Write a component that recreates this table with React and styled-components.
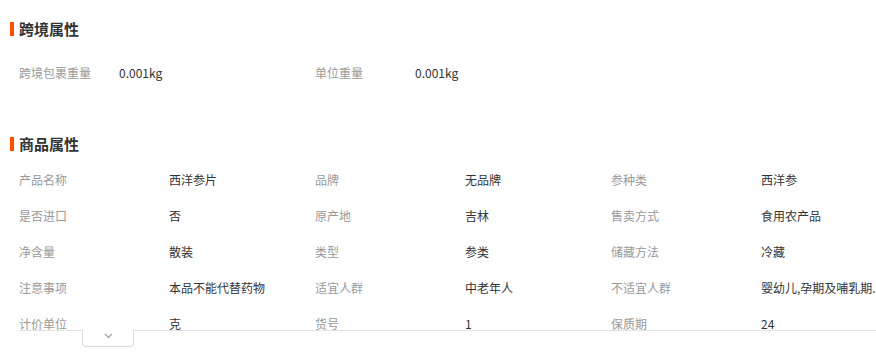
import React from "react";
import styled, { createGlobalStyle } from "styled-components";

const Global = createGlobalStyle`
  html { overflow: hidden; }
  html, body { margin: 0; padding: 0; background: #fff; }
  body { font-family: "Noto Sans CJK SC", "Noto Sans", sans-serif; }
`;

const Wrap = styled.div`
  position: relative;
  width: 876px;
  padding-bottom: 20px;
`;

const Fold = styled.div`
  margin-left: 10px;
  padding-left: 9px;
  height: 330px;
  overflow: hidden;
`;

const Divider = styled.div`
  margin-left: 20px;
  height: 1px;
  background: #e3e3e3;
`;

const Title = styled.h3`
  display: flex;
  align-items: center;
  gap: 5px;
  margin: ${(p) => p.$top}px 0 0 -9px;
  height: 20px;
  font-size: 15px;
  font-weight: 700;
  color: #333;
  line-height: 20px;
  &::before {
    content: "";
    width: 4px;
    height: 14px;
    background: #ff4e00;
  }
`;

const Grid = styled.div`
  display: grid;
  grid-template-columns: repeat(3, 296px);
  margin-top: ${(p) => p.$top}px;
`;

const Item = styled.div`
  display: flex;
  height: 36px;
  align-items: center;
  font-size: 12px;
  white-space: nowrap;
`;

const Label = styled.span`
  width: ${(p) => p.$w}px;
  flex: none;
  color: #999;
`;

const Value = styled.span`
  color: #333;
`;

const Toggle = styled.button`
  position: absolute;
  left: 82px;
  top: 330px;
  width: 52px;
  height: 17px;
  padding: 3px 0 0;
  background: #fff;
  border: 1px solid #dcdcdc;
  border-top: none;
  border-radius: 0 0 4px 4px;
  display: flex;
  justify-content: center;
  align-items: flex-start;
  cursor: pointer;
`;

const cross = [
  ["跨境包裹重量", "0.001kg"],
  ["单位重量", "0.001kg"],
];

const props = [
  ["产品名称", "西洋参片"],
  ["品牌", "无品牌"],
  ["参种类", "西洋参"],
  ["是否进口", "否"],
  ["原产地", "吉林"],
  ["售卖方式", "食用农产品"],
  ["净含量", "散装"],
  ["类型", "参类"],
  ["储藏方法", "冷藏"],
  ["注意事项", "本品不能代替药物"],
  ["适宜人群", "中老年人"],
  ["不适宜人群", "婴幼儿,孕期及哺乳期."],
  ["计价单位", "克"],
  ["货号", "1"],
  ["保质期", "24"],
];

export default function App() {
  return (
    <Wrap>
      <Global />
      <Fold>
        <Title $top={19}>跨境属性</Title>
        <Grid $top={15}>
          {cross.map(([k, v]) => (
            <Item key={k}>
              <Label $w={100}>{k}</Label>
              <Value>{v}</Value>
            </Item>
          ))}
        </Grid>
        <Title $top={44}>商品属性</Title>
        <Grid $top={7}>
          {props.map(([k, v]) => (
            <Item key={k}>
              <Label $w={150}>{k}</Label>
              <Value>{v}</Value>
            </Item>
          ))}
        </Grid>
      </Fold>
      <Divider />
      <Toggle aria-label="展开">
        <svg width="9" height="6" viewBox="0 0 9 6">
          <path d="M1 1l3.5 3.5L8 1" fill="none" stroke="#9aa3b0" strokeWidth="1.2" />
        </svg>
      </Toggle>
    </Wrap>
  );
}
